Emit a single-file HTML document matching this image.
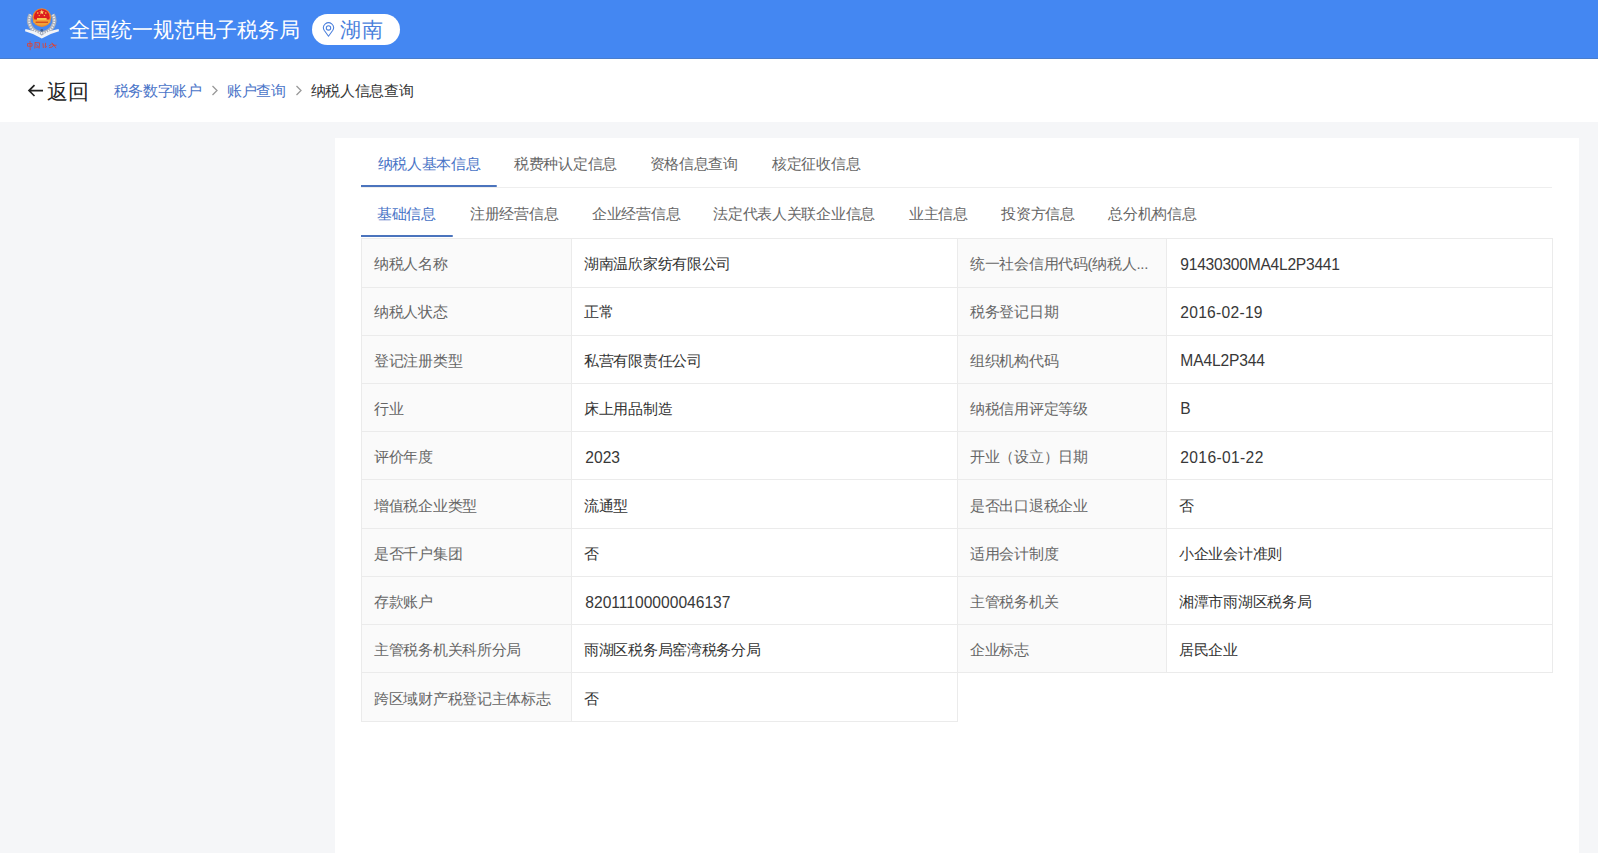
<!DOCTYPE html>
<html><head><meta charset="utf-8">
<style>
*{margin:0;padding:0;box-sizing:border-box;}
html,body{width:1598px;height:853px;overflow:hidden;background:#f5f6f8;font-family:"Liberation Sans",sans-serif;}
.a{position:absolute;white-space:nowrap;}
.hdr{position:absolute;left:0;top:0;width:1598px;height:58px;background:#4487f2;}
.title{left:68.5px;top:16px;font-size:21px;line-height:28px;color:#fff;}
.pill{position:absolute;left:312px;top:14px;width:88px;height:31px;border-radius:15.5px;background:#fff;}
.bc{position:absolute;left:0;top:59px;width:1598px;height:63px;background:#fff;}
.back{left:47px;top:77.5px;font-size:21px;line-height:28px;color:#222;}
.crumb{top:80.5px;font-size:15px;letter-spacing:-0.3px;line-height:20px;}
.card{position:absolute;left:335px;top:138px;width:1244px;height:715px;background:#fff;}
.tab{font-size:15px;letter-spacing:-0.3px;line-height:20px;color:#666;}
.tab.r1{top:154px;}
.tab.r2{top:204px;}
.tab.act{color:#4873c6;}
.ul{position:absolute;height:2px;background:#4b74bd;border-radius:0 1px 1px 0;}
.c{position:absolute;}
.ln{position:absolute;background:#ebebeb;}
.t{position:absolute;white-space:nowrap;font-size:15px;letter-spacing:-0.3px;line-height:20px;margin-top:16px;}
.t.k{color:#666;}
.t.v{color:#333;}
.t.n{font-size:15.6px;margin-top:16.5px;color:#383838;}
</style></head>
<body>
<div class="hdr"></div><div style="position:absolute;left:0;top:58px;width:1598px;height:1px;background:#4a7dcc"></div>
<svg style="position:absolute;left:22px;top:3px" width="40" height="50" viewBox="0 0 40 50">
  <path d="M8.6 11.5 A12.6 12.6 0 1 0 30.8 11.5" fill="none" stroke="#a8aebb" stroke-width="4.2"/>
  <path d="M8.6 11.5 A12.6 12.6 0 1 0 30.8 11.5" fill="none" stroke="#eef1f6" stroke-width="1.8" stroke-dasharray="1.3 1.2"/>
  <path d="M3.4 26 Q12 27.4 19.8 32.4 Q27.6 27.4 36.6 26 L37 28.2 Q28 30.4 19.8 35.6 Q11.6 30.4 3 28.2 Z" fill="#f2f4f8"/>
  <circle cx="19.8" cy="14.6" r="9.4" fill="#ee8a2c"/>
  <circle cx="19.8" cy="14.2" r="7.9" fill="#dc1d20"/>
  <path d="M11.6 16.4 L28 16.4 L28.4 19.6 Q19.8 25.6 11.2 19.6 Z" fill="#f2a238"/>
  <rect x="15" y="15" width="9.6" height="2" fill="#f8c650"/>
  <rect x="13.6" y="18.6" width="12.4" height="1.3" fill="#d4481c"/>
  <path d="M19.8 6.6 L20.5 8.5 L22.4 8.5 L20.8 9.6 L21.4 11.4 L19.8 10.3 L18.2 11.4 L18.8 9.6 L17.2 8.5 L19.1 8.5 Z" fill="#ffe07a"/>
  <circle cx="15.8" cy="10" r="0.8" fill="#ffd54a"/><circle cx="23.8" cy="10" r="0.8" fill="#ffd54a"/>
  <circle cx="17.2" cy="12.6" r="0.7" fill="#ffd54a"/><circle cx="22.4" cy="12.6" r="0.7" fill="#ffd54a"/>
  <circle cx="19.8" cy="27.4" r="1.4" fill="#3b5f96"/>
  <g fill="none" stroke="#dd4334" stroke-width="0.85" stroke-linecap="round">
    <path d="M8 38.4 L8.2 46.8 M5.9 40.6 L10.1 40.6 L10 43.2 L5.9 43.2 Z"/>
    <path d="M13.2 39.6 L12.8 45.2 M13.2 39.6 L17.6 39.8 L17.2 45.2 M14.4 41.6 L16.2 43.6 M14.2 44.2 L16.4 44.2"/>
    <path d="M21 40.6 L21.3 44.6 M23.6 40.2 L23.2 44.6 L24.6 43.6"/>
    <path d="M27.2 42.6 Q29.6 39.6 32.2 41.8 Q30.2 45.2 27.4 44.6 M30.2 40 L33.8 44.8 M31.2 42.6 L34.2 42.2"/>
  </g>
</svg>
<div class="a title">全国统一规范电子税务局</div>
<div class="pill"></div>
<svg style="position:absolute;left:322px;top:21.5px" width="13" height="16" viewBox="0 0 13 16">
  <path d="M6.5 14.3 L2.17 8.3 A5 5 0 1 1 10.83 8.3 Z" fill="none" stroke="#4a7fdc" stroke-width="1.05" stroke-linejoin="round"/>
  <circle cx="6.5" cy="5.9" r="2.2" fill="none" stroke="#4a7fdc" stroke-width="1.05"/>
</svg>
<div class="a" style="left:339.5px;top:16px;font-size:21px;letter-spacing:1px;line-height:28px;color:#4a7fdc">湖南</div>
<div class="bc"></div>
<svg style="position:absolute;left:27px;top:84px" width="17" height="14" viewBox="0 0 17 14">
  <path d="M2 6.6 H16 M7.5 1.2 L2 6.6 L7.5 12" fill="none" stroke="#222" stroke-width="1.7"/>
</svg>
<div class="a back">返回</div>
<div class="a crumb" style="left:113.5px;color:#4a74c8">税务数字账户</div>
<svg style="position:absolute;left:211px;top:85px" width="8" height="11" viewBox="0 0 8 11"><path d="M1.5 1 L6 5.5 L1.5 10" fill="none" stroke="#999" stroke-width="1.3"/></svg>
<div class="a crumb" style="left:227px;color:#4a74c8">账户查询</div>
<svg style="position:absolute;left:294.5px;top:85px" width="8" height="11" viewBox="0 0 8 11"><path d="M1.5 1 L6 5.5 L1.5 10" fill="none" stroke="#999" stroke-width="1.3"/></svg>
<div class="a crumb" style="left:310.5px;color:#333">纳税人信息查询</div>
<div class="card"></div>
<div class="a tab r1 act" style="left:377.5px">纳税人基本信息</div>
<div class="a tab r1" style="left:514px">税费种认定信息</div>
<div class="a tab r1" style="left:649.5px">资格信息查询</div>
<div class="a tab r1" style="left:772px">核定征收信息</div>
<div class="ln" style="left:361px;top:187px;width:1191px;height:1px;background:#eeeeee"></div>
<div class="ul" style="left:361px;top:185px;width:136px"></div>
<div class="a tab r2 act" style="left:377px">基础信息</div>
<div class="a tab r2" style="left:470px">注册经营信息</div>
<div class="a tab r2" style="left:592px">企业经营信息</div>
<div class="a tab r2" style="left:713.3px">法定代表人关联企业信息</div>
<div class="a tab r2" style="left:909px">业主信息</div>
<div class="a tab r2" style="left:1001.2px">投资方信息</div>
<div class="a tab r2" style="left:1108.4px">总分机构信息</div>
<div class="ul" style="left:361px;top:235px;width:92px"></div>
<div class="c" style="left:362px;top:239px;width:209px;height:48px;background:#fafafa"></div>
<div class="t k" style="left:374px;top:238.00px">纳税人名称</div>
<div class="c" style="left:572px;top:239px;width:385px;height:48px;background:#fff"></div>
<div class="t v" style="left:584px;top:238.00px">湖南温欣家纺有限公司</div>
<div class="c" style="left:958px;top:239px;width:208px;height:48px;background:#fafafa"></div>
<div class="t k" style="left:970px;top:238.00px">统一社会信用代码(纳税人...</div>
<div class="c" style="left:1167px;top:239px;width:385px;height:48px;background:#fff"></div>
<div class="t v n" style="left:1180.3px;top:238.00px;letter-spacing:-0.25px">91430300MA4L2P3441</div>
<div class="c" style="left:362px;top:288px;width:209px;height:47px;background:#fafafa"></div>
<div class="t k" style="left:374px;top:286.30px">纳税人状态</div>
<div class="c" style="left:572px;top:288px;width:385px;height:47px;background:#fff"></div>
<div class="t v" style="left:584px;top:286.30px">正常</div>
<div class="c" style="left:958px;top:288px;width:208px;height:47px;background:#fafafa"></div>
<div class="t k" style="left:970px;top:286.30px">税务登记日期</div>
<div class="c" style="left:1167px;top:288px;width:385px;height:47px;background:#fff"></div>
<div class="t v n" style="left:1180.3px;top:286.30px;letter-spacing:0.27px">2016-02-19</div>
<div class="c" style="left:362px;top:336px;width:209px;height:47px;background:#fafafa"></div>
<div class="t k" style="left:374px;top:334.60px">登记注册类型</div>
<div class="c" style="left:572px;top:336px;width:385px;height:47px;background:#fff"></div>
<div class="t v" style="left:584px;top:334.60px">私营有限责任公司</div>
<div class="c" style="left:958px;top:336px;width:208px;height:47px;background:#fafafa"></div>
<div class="t k" style="left:970px;top:334.60px">组织机构代码</div>
<div class="c" style="left:1167px;top:336px;width:385px;height:47px;background:#fff"></div>
<div class="t v n" style="left:1180.3px;top:334.60px;letter-spacing:-0.14px">MA4L2P344</div>
<div class="c" style="left:362px;top:384px;width:209px;height:47px;background:#fafafa"></div>
<div class="t k" style="left:374px;top:382.90px">行业</div>
<div class="c" style="left:572px;top:384px;width:385px;height:47px;background:#fff"></div>
<div class="t v" style="left:584px;top:382.90px">床上用品制造</div>
<div class="c" style="left:958px;top:384px;width:208px;height:47px;background:#fafafa"></div>
<div class="t k" style="left:970px;top:382.90px">纳税信用评定等级</div>
<div class="c" style="left:1167px;top:384px;width:385px;height:47px;background:#fff"></div>
<div class="t v n" style="left:1180.3px;top:382.90px;letter-spacing:0px">B</div>
<div class="c" style="left:362px;top:432px;width:209px;height:47px;background:#fafafa"></div>
<div class="t k" style="left:374px;top:431.20px">评价年度</div>
<div class="c" style="left:572px;top:432px;width:385px;height:47px;background:#fff"></div>
<div class="t v n" style="left:585.3px;top:431.20px;letter-spacing:0px">2023</div>
<div class="c" style="left:958px;top:432px;width:208px;height:47px;background:#fafafa"></div>
<div class="t k" style="left:970px;top:431.20px">开业（设立）日期</div>
<div class="c" style="left:1167px;top:432px;width:385px;height:47px;background:#fff"></div>
<div class="t v n" style="left:1180.3px;top:431.20px;letter-spacing:0.36px">2016-01-22</div>
<div class="c" style="left:362px;top:480px;width:209px;height:48px;background:#fafafa"></div>
<div class="t k" style="left:374px;top:479.50px">增值税企业类型</div>
<div class="c" style="left:572px;top:480px;width:385px;height:48px;background:#fff"></div>
<div class="t v" style="left:584px;top:479.50px">流通型</div>
<div class="c" style="left:958px;top:480px;width:208px;height:48px;background:#fafafa"></div>
<div class="t k" style="left:970px;top:479.50px">是否出口退税企业</div>
<div class="c" style="left:1167px;top:480px;width:385px;height:48px;background:#fff"></div>
<div class="t v" style="left:1179px;top:479.50px">否</div>
<div class="c" style="left:362px;top:529px;width:209px;height:47px;background:#fafafa"></div>
<div class="t k" style="left:374px;top:527.80px">是否千户集团</div>
<div class="c" style="left:572px;top:529px;width:385px;height:47px;background:#fff"></div>
<div class="t v" style="left:584px;top:527.80px">否</div>
<div class="c" style="left:958px;top:529px;width:208px;height:47px;background:#fafafa"></div>
<div class="t k" style="left:970px;top:527.80px">适用会计制度</div>
<div class="c" style="left:1167px;top:529px;width:385px;height:47px;background:#fff"></div>
<div class="t v" style="left:1179px;top:527.80px">小企业会计准则</div>
<div class="c" style="left:362px;top:577px;width:209px;height:47px;background:#fafafa"></div>
<div class="t k" style="left:374px;top:576.10px">存款账户</div>
<div class="c" style="left:572px;top:577px;width:385px;height:47px;background:#fff"></div>
<div class="t v n" style="left:585.3px;top:576.10px;letter-spacing:0px">82011100000046137</div>
<div class="c" style="left:958px;top:577px;width:208px;height:47px;background:#fafafa"></div>
<div class="t k" style="left:970px;top:576.10px">主管税务机关</div>
<div class="c" style="left:1167px;top:577px;width:385px;height:47px;background:#fff"></div>
<div class="t v" style="left:1179px;top:576.10px">湘潭市雨湖区税务局</div>
<div class="c" style="left:362px;top:625px;width:209px;height:47px;background:#fafafa"></div>
<div class="t k" style="left:374px;top:624.40px">主管税务机关科所分局</div>
<div class="c" style="left:572px;top:625px;width:385px;height:47px;background:#fff"></div>
<div class="t v" style="left:584px;top:624.40px">雨湖区税务局窑湾税务分局</div>
<div class="c" style="left:958px;top:625px;width:208px;height:47px;background:#fafafa"></div>
<div class="t k" style="left:970px;top:624.40px">企业标志</div>
<div class="c" style="left:1167px;top:625px;width:385px;height:47px;background:#fff"></div>
<div class="t v" style="left:1179px;top:624.40px">居民企业</div>
<div class="c" style="left:362px;top:673px;width:209px;height:48px;background:#fafafa"></div>
<div class="t k" style="left:374px;top:672.70px">跨区域财产税登记主体标志</div>
<div class="c" style="left:572px;top:673px;width:385px;height:48px;background:#fff"></div>
<div class="t v" style="left:584px;top:672.70px">否</div>
<div class="ln" style="left:361px;top:238px;width:1px;height:50px"></div>
<div class="ln" style="left:571px;top:238px;width:1px;height:50px"></div>
<div class="ln" style="left:957px;top:238px;width:1px;height:50px"></div>
<div class="ln" style="left:1166px;top:238px;width:1px;height:50px"></div>
<div class="ln" style="left:1552px;top:238px;width:1px;height:50px"></div>
<div class="ln" style="left:361px;top:287px;width:1px;height:49px"></div>
<div class="ln" style="left:571px;top:287px;width:1px;height:49px"></div>
<div class="ln" style="left:957px;top:287px;width:1px;height:49px"></div>
<div class="ln" style="left:1166px;top:287px;width:1px;height:49px"></div>
<div class="ln" style="left:1552px;top:287px;width:1px;height:49px"></div>
<div class="ln" style="left:361px;top:335px;width:1px;height:49px"></div>
<div class="ln" style="left:571px;top:335px;width:1px;height:49px"></div>
<div class="ln" style="left:957px;top:335px;width:1px;height:49px"></div>
<div class="ln" style="left:1166px;top:335px;width:1px;height:49px"></div>
<div class="ln" style="left:1552px;top:335px;width:1px;height:49px"></div>
<div class="ln" style="left:361px;top:383px;width:1px;height:49px"></div>
<div class="ln" style="left:571px;top:383px;width:1px;height:49px"></div>
<div class="ln" style="left:957px;top:383px;width:1px;height:49px"></div>
<div class="ln" style="left:1166px;top:383px;width:1px;height:49px"></div>
<div class="ln" style="left:1552px;top:383px;width:1px;height:49px"></div>
<div class="ln" style="left:361px;top:431px;width:1px;height:49px"></div>
<div class="ln" style="left:571px;top:431px;width:1px;height:49px"></div>
<div class="ln" style="left:957px;top:431px;width:1px;height:49px"></div>
<div class="ln" style="left:1166px;top:431px;width:1px;height:49px"></div>
<div class="ln" style="left:1552px;top:431px;width:1px;height:49px"></div>
<div class="ln" style="left:361px;top:479px;width:1px;height:50px"></div>
<div class="ln" style="left:571px;top:479px;width:1px;height:50px"></div>
<div class="ln" style="left:957px;top:479px;width:1px;height:50px"></div>
<div class="ln" style="left:1166px;top:479px;width:1px;height:50px"></div>
<div class="ln" style="left:1552px;top:479px;width:1px;height:50px"></div>
<div class="ln" style="left:361px;top:528px;width:1px;height:49px"></div>
<div class="ln" style="left:571px;top:528px;width:1px;height:49px"></div>
<div class="ln" style="left:957px;top:528px;width:1px;height:49px"></div>
<div class="ln" style="left:1166px;top:528px;width:1px;height:49px"></div>
<div class="ln" style="left:1552px;top:528px;width:1px;height:49px"></div>
<div class="ln" style="left:361px;top:576px;width:1px;height:49px"></div>
<div class="ln" style="left:571px;top:576px;width:1px;height:49px"></div>
<div class="ln" style="left:957px;top:576px;width:1px;height:49px"></div>
<div class="ln" style="left:1166px;top:576px;width:1px;height:49px"></div>
<div class="ln" style="left:1552px;top:576px;width:1px;height:49px"></div>
<div class="ln" style="left:361px;top:624px;width:1px;height:49px"></div>
<div class="ln" style="left:571px;top:624px;width:1px;height:49px"></div>
<div class="ln" style="left:957px;top:624px;width:1px;height:49px"></div>
<div class="ln" style="left:1166px;top:624px;width:1px;height:49px"></div>
<div class="ln" style="left:1552px;top:624px;width:1px;height:49px"></div>
<div class="ln" style="left:361px;top:672px;width:1px;height:50px"></div>
<div class="ln" style="left:571px;top:672px;width:1px;height:50px"></div>
<div class="ln" style="left:957px;top:672px;width:1px;height:50px"></div>
<div class="ln" style="left:361px;top:238px;width:1192px;height:1px"></div>
<div class="ln" style="left:361px;top:287px;width:1192px;height:1px"></div>
<div class="ln" style="left:361px;top:335px;width:1192px;height:1px"></div>
<div class="ln" style="left:361px;top:383px;width:1192px;height:1px"></div>
<div class="ln" style="left:361px;top:431px;width:1192px;height:1px"></div>
<div class="ln" style="left:361px;top:479px;width:1192px;height:1px"></div>
<div class="ln" style="left:361px;top:528px;width:1192px;height:1px"></div>
<div class="ln" style="left:361px;top:576px;width:1192px;height:1px"></div>
<div class="ln" style="left:361px;top:624px;width:1192px;height:1px"></div>
<div class="ln" style="left:361px;top:672px;width:1192px;height:1px"></div>
<div class="ln" style="left:361px;top:721px;width:597px;height:1px"></div>
</body></html>
